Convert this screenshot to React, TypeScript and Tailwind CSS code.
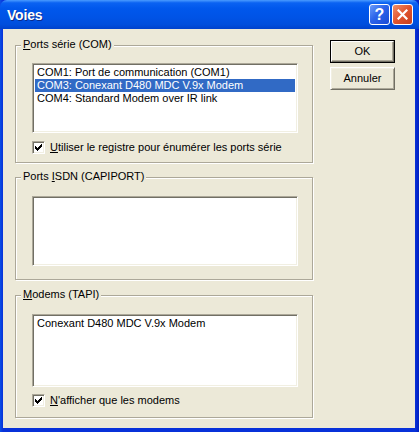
import React from "react";

const FONT = { fontFamily: '"Liberation Sans", Arial, sans-serif' };

// Classic sunken edge (listbox / checkbox)
const SUNKEN =
  "border border-t-[#ACA899] border-l-[#ACA899] border-r-white border-b-white shadow-[inset_1px_1px_0_#716F64,inset_-1px_-1px_0_#F1EFE2]";

function Mnemonic({ text, at }: { text: string; at: number }) {
  return (
    <>
      {text.slice(0, at)}
      <span className="underline underline-offset-[1px]">{text[at]}</span>
      {text.slice(at + 1)}
    </>
  );
}

function GroupBox({
  label,
  at,
  className,
  children,
}: {
  label: string;
  at: number;
  className: string;
  children: React.ReactNode;
}) {
  return (
    <div
      className={`relative border border-[#ACA899] shadow-[inset_1px_1px_0_#ffffff,1px_1px_0_#ffffff] ${className}`}
    >
      <span className="absolute left-[5px] top-[-8px] bg-[#ECE9D8] px-[2px] text-[11px] leading-[13px] text-black">
        <Mnemonic text={label} at={at} />
      </span>
      {children}
    </div>
  );
}

function ListBox({
  items,
  selected,
  className,
}: {
  items: string[];
  selected?: number;
  className: string;
}) {
  return (
    <div className={`bg-white p-[2px] ${SUNKEN} ${className}`}>
      {items.map((item, i) => (
        <div
          key={item}
          className={`h-[13px] whitespace-nowrap pl-[2px] text-[11px] leading-[13px] ${
            i === selected ? "bg-[#316AC5] text-white" : "text-black"
          }`}
        >
          {item}
        </div>
      ))}
    </div>
  );
}

function CheckBox({ label, at }: { label: string; at: number }) {
  return (
    <div className="flex items-center gap-[5px]">
      <div className={`flex h-[13px] w-[13px] items-center justify-center bg-white ${SUNKEN}`}>
        <svg width="7" height="7" viewBox="0 0 7 7" shapeRendering="crispEdges">
          <path d="M0 2h1v3h-1zM1 3h1v3h-1zM2 4h1v3h-1zM3 3h1v3h-1zM4 2h1v3h-1zM5 1h1v3h-1zM6 0h1v3h-1z" fill="#000" />
        </svg>
      </div>
      <span className="text-[11px] leading-[13px] text-black">
        <Mnemonic text={label} at={at} />
      </span>
    </div>
  );
}

function DialogButton({ label, isDefault }: { label: string; isDefault?: boolean }) {
  if (isDefault) {
    return (
      <div className="h-[23px] w-[65px] border border-black">
        <div className="flex h-full w-full items-center justify-center border border-t-white border-l-white border-r-[#716F64] border-b-[#716F64] bg-[#ECE9D8] text-[11px] text-black shadow-[inset_-1px_-1px_0_#ACA899]">
          {label}
        </div>
      </div>
    );
  }
  return (
    <div className="flex h-[23px] w-[65px] items-center justify-center border border-t-white border-l-white border-r-[#716F64] border-b-[#716F64] bg-[#ECE9D8] text-[11px] text-black shadow-[inset_1px_1px_0_#F1EFE2,inset_-1px_-1px_0_#ACA899]">
      {label}
    </div>
  );
}

export default function App() {
  return (
    <div
      className="flex h-[432px] w-[419px] flex-col overflow-hidden bg-[linear-gradient(to_right,#0A4FE6_0px,#0831D9_3px,#0831D9_415px,#0020C0_419px)]"
      style={FONT}
    >
      {/* Title bar */}
      <div className="flex h-[29px] shrink-0 items-center rounded-t-[7px] bg-[linear-gradient(to_bottom,#4A9BFF_0%,#0A62F2_10%,#0057EC_30%,#0053E6_60%,#004EDC_85%,#0042CC_100%)] pl-[7px] pr-[6px]">
        <span className="mt-[1px] flex-1 text-[14px] font-bold tracking-[-0.2px] text-white [text-shadow:1px_1px_0_#0B2A8C]">
          Voies
        </span>
        <div className="flex items-center gap-[2px]">
          <div className="flex h-[21px] w-[21px] items-center justify-center rounded-[3px] border border-white bg-[linear-gradient(135deg,#6A9CFA_0%,#2C64EA_45%,#1A4BD6_100%)] text-[16px] font-bold leading-none text-white">
            ?
          </div>
          <div className="flex h-[21px] w-[21px] items-center justify-center rounded-[3px] border border-white bg-[linear-gradient(135deg,#F0906A_0%,#E0542E_50%,#C8401E_100%)]">
            <svg width="11" height="11" viewBox="0 0 11 11">
              <path d="M1.5 1.5l8 8M9.5 1.5l-8 8" stroke="#fff" strokeWidth="2.2" strokeLinecap="square" />
            </svg>
          </div>
        </div>
      </div>

      {/* Body */}
      <div className="ml-[3px] mr-[4px] mb-[4px] flex flex-1 items-start gap-[17px] bg-[#ECE9D8] pl-[12px] pt-[11px]">
        <div className="mt-[5px] flex w-[298px] flex-col">
          <GroupBox label="Ports série (COM)" at={0} className="h-[118px] pl-[16px] pt-[17px]">
            <ListBox
              className="h-[70px] w-[266px]"
              selected={1}
              items={[
                "COM1: Port de communication (COM1)",
                "COM3: Conexant D480 MDC V.9x Modem",
                "COM4: Standard Modem over IR link",
              ]}
            />
            <div className="mt-[8px]">
              <CheckBox label="Utiliser le registre pour énumérer les ports série" at={0} />
            </div>
          </GroupBox>

          <GroupBox label="Ports ISDN (CAPIPORT)" at={6} className="mt-[14px] h-[103px] pl-[16px] pt-[18px]">
            <ListBox className="h-[70px] w-[266px]" items={[]} />
          </GroupBox>

          <GroupBox label="Modems (TAPI)" at={0} className="mt-[15px] h-[123px] pl-[16px] pt-[18px]">
            <ListBox className="h-[73px] w-[266px]" items={["Conexant D480 MDC V.9x Modem"]} />
            <div className="mt-[7px]">
              <CheckBox label="N'afficher que les modems" at={0} />
            </div>
          </GroupBox>
        </div>

        <div className="flex flex-col gap-[4px]">
          <DialogButton label="OK" isDefault />
          <DialogButton label="Annuler" />
        </div>
      </div>
    </div>
  );
}
